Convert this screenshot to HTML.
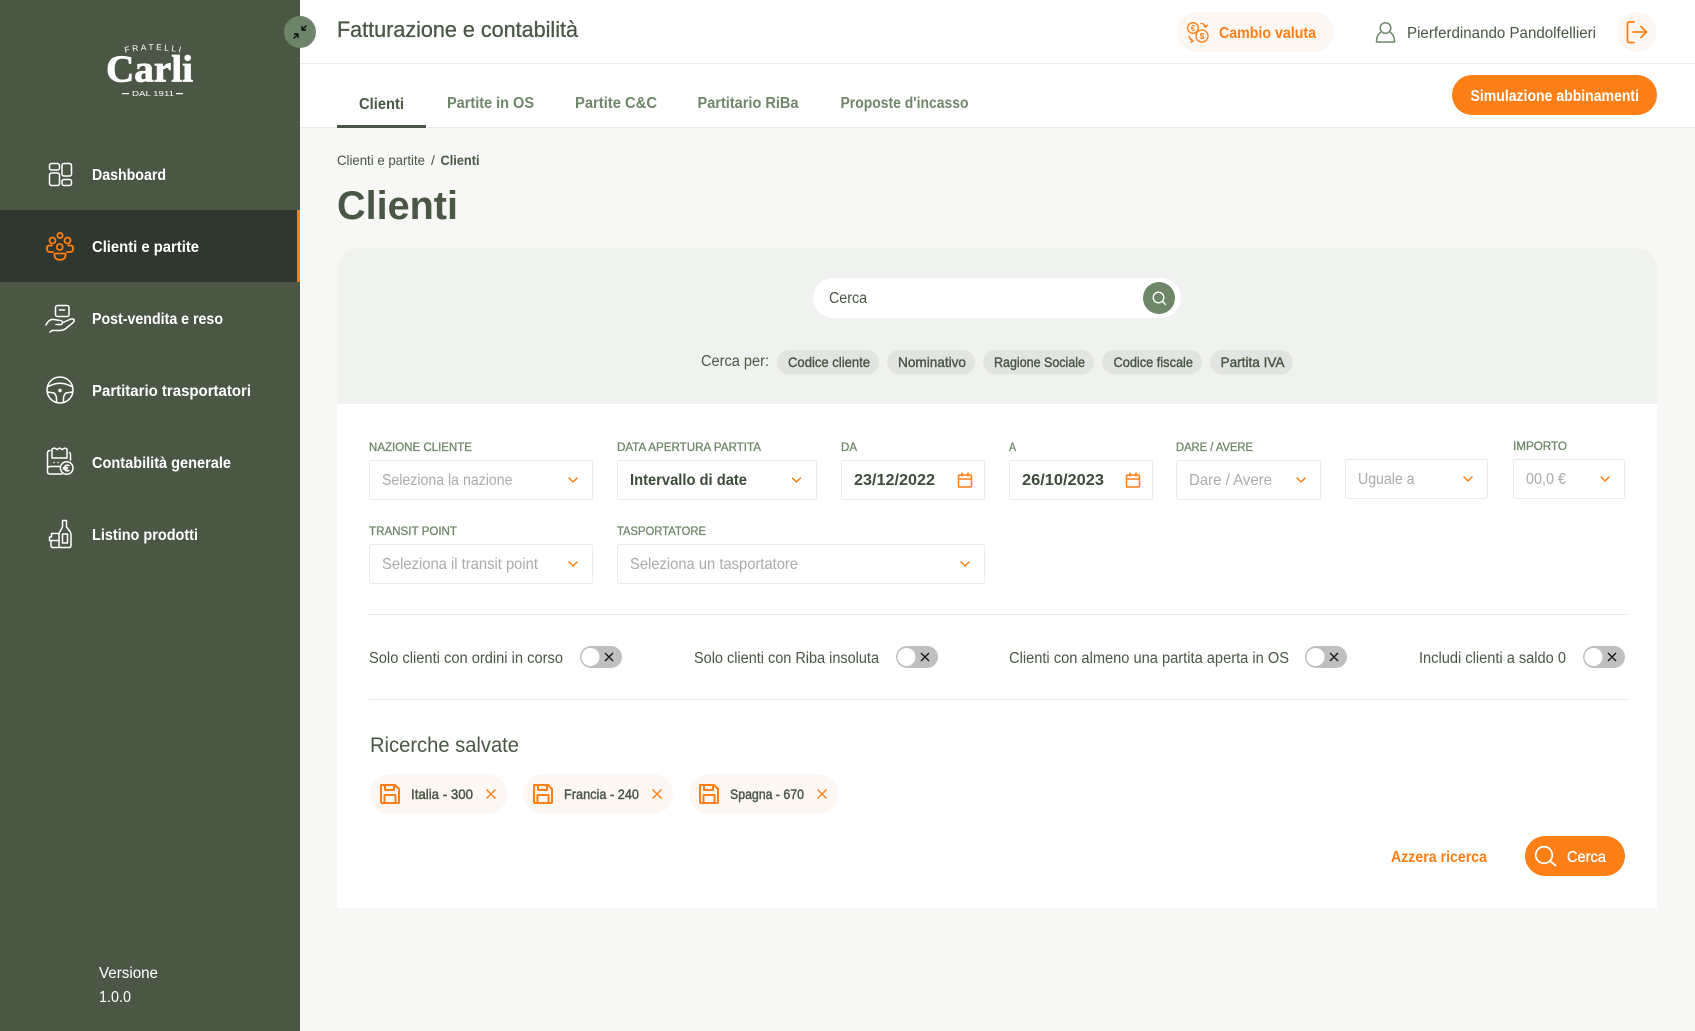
<!DOCTYPE html>
<html lang="it"><head><meta charset="utf-8"><title>Clienti</title>
<style>
html,body{margin:0;padding:0;background:#f7f7f5;width:1695px;height:1031px;overflow:hidden}
svg{display:block}
text{font-family:"Liberation Sans",sans-serif;white-space:pre}
.nav{font-size:15.5px;font-weight:700;fill:#fff}
.tab{font-size:15.5px;fill:#6f8769;font-weight:700}
.lab{font-size:11.5px;fill:#6f8769;stroke:#6f8769;stroke-width:.3}
.ph{font-size:16px;fill:#a9aca7}
.val{font-size:16px;fill:#3f4b3b;font-weight:700}
.tg{font-size:15.5px;fill:#4a5745}
.chip{font-size:14px;fill:#4a5745;stroke:#4a5745;stroke-width:.4}
.sv{font-size:14px;fill:#4a5745;stroke:#4a5745;stroke-width:.45}
.or{fill:none;stroke:#ff7f17;stroke-width:1.5;stroke-linecap:round;stroke-linejoin:round}
.wh{fill:none;stroke:#fff;stroke-width:1.5;stroke-linecap:round;stroke-linejoin:round}
.box{fill:#fff;stroke:#ebebeb;stroke-width:1}
</style></head><body>
<svg xmlns="http://www.w3.org/2000/svg" width="1695" height="1031" viewBox="0 0 1695 1031">
<rect width="1695" height="1031" fill="#f7f7f5"/>
<!-- top bars -->
<rect x="300" width="1395" height="127" fill="#fff"/>
<rect x="300" y="63" width="1395" height="1" fill="#eeeeec"/>
<rect x="300" y="127" width="1395" height="1" fill="#e9e9e7"/>
<!-- sidebar -->
<rect width="300" height="1031" fill="#4a5745"/>
<rect y="210" width="300" height="72" fill="#30372e"/>
<rect x="297" y="210" width="3" height="72" fill="#ff7f17"/>
<!-- logo -->
<path id="arc" d="M125 53 Q153 47 183 53" fill="none"/>
<text font-size="8.5" fill="#fff" letter-spacing="2.4"><textPath href="#arc">FRATELLI</textPath></text>
<text x="106" y="81.5" textLength="87" lengthAdjust="spacingAndGlyphs" stroke="#fff" stroke-width=".8" style="font-family:'Liberation Serif',serif;font-size:38px;font-weight:700;fill:#fff">Carli</text>
<rect x="122" y="93" width="7" height="1.2" fill="#fff"/><rect x="176" y="93" width="7" height="1.2" fill="#fff"/>
<text x="132" y="96" textLength="42" lengthAdjust="spacingAndGlyphs" font-size="7.5" fill="#fff">DAL 1911</text>
<!-- collapse -->
<circle cx="300" cy="32" r="16" fill="#6e8469"/>
<path d="M293.5 38.5L298 34M298 38V34H294M306.5 25.5L302 30M302 26V30H306" fill="none" stroke="#111" stroke-width="1.4"/>
<!-- nav text -->
<text class="nav" x="92" y="180" textLength="74" lengthAdjust="spacingAndGlyphs">Dashboard</text>
<text class="nav" x="92" y="252" textLength="107" lengthAdjust="spacingAndGlyphs">Clienti e partite</text>
<text class="nav" x="92" y="324" textLength="131" lengthAdjust="spacingAndGlyphs">Post-vendita e reso</text>
<text class="nav" x="92" y="396" textLength="159" lengthAdjust="spacingAndGlyphs">Partitario trasportatori</text>
<text class="nav" x="92" y="468" textLength="139" lengthAdjust="spacingAndGlyphs">Contabilità generale</text>
<text class="nav" x="92" y="540" textLength="106" lengthAdjust="spacingAndGlyphs">Listino prodotti</text>
<text x="99" y="978" textLength="59" lengthAdjust="spacingAndGlyphs" font-size="15.5" fill="#fff">Versione</text>
<text x="99" y="1002" textLength="32" lengthAdjust="spacingAndGlyphs" font-size="15.5" fill="#fff">1.0.0</text>
<!-- nav icons -->
<g class="wh">
<rect x="49.5" y="163.5" width="10" height="6.5" rx="2"/><rect x="49.5" y="173" width="10" height="12.5" rx="2"/>
<rect x="62" y="163.5" width="9.5" height="12.5" rx="2"/><rect x="62" y="179.5" width="9.5" height="6" rx="2"/>
</g>
<g class="or" style="stroke-width:1.8">
<circle cx="60" cy="235.5" r="2.6"/><circle cx="52.5" cy="240.5" r="3"/><circle cx="67.5" cy="240.5" r="3"/><circle cx="59.7" cy="247" r="3"/>
<path d="M52 245.5H49.5Q47 245.5 47 248V249Q47 252 50 252H53M68 245.5H70.5Q73 245.5 73 248V249Q73 252 70 252H67M54.5 253.5H65.5Q66 259.8 60 259.8Q54 259.8 54.5 253.5Z"/>
</g>
<g class="wh">
<rect x="55.5" y="305.5" width="13.5" height="11" rx="2"/><path d="M59.5 310H64.5"/>
<path d="M46 325Q49 318.5 54 319.5L60 320.5Q63 321 62.5 323Q62 325 59 324.5H56M63 322.5L71 319Q75 318.5 74 321.5Q73 323 67 327.5Q65 330 60 330.5H52L50 332"/>
<circle cx="60" cy="390" r="13"/>
<path d="M48.5 386.5Q60 380 71.5 386.5M47.5 392L54 393Q57 395 56.5 402M72.5 392L66 393Q63 395 63.5 402"/>
<circle cx="60" cy="390.5" r="1" fill="#fff"/>
<path d="M62 474H50Q47.5 474 47.5 471.5V453Q47.5 450.5 50 450.5M52 458V449L54.5 448 57 449.5 59.5 448 62 449.5 65 448 67 449V458M52 458H67M69.5 452.5Q70.5 453 70.5 455V460M47.5 468.5Q48 466.5 50 466.5H60M54 462.5H54.1M58 462.5H58.1"/>
<circle cx="66.7" cy="468" r="6.3"/><path d="M69 465.5Q65 464 64.3 468Q65 472 69 470.5M63.5 467.5H67.5M63.5 469H67"/>
<path d="M62.5 520.5H66.5V527L70 531.5Q71 533 71 535V545.5Q71 547.5 69 547.5H61Q59 547.5 59 545.5V535Q59 533 60 531.5L62.5 527Z"/>
<rect x="62.5" y="534" width="5" height="9"/>
<path d="M59 533.5H51.5V537H49.5V540.5H51V545.5Q51 547.5 53 547.5H60M51 540.5H59"/>
</g>
<!-- header -->
<text x="337" y="37" textLength="241" lengthAdjust="spacingAndGlyphs" font-size="22" fill="#4a5745" stroke="#4a5745" stroke-width=".3">Fatturazione e contabilità</text>
<rect x="1177" y="12" width="157" height="40" rx="20" fill="#fdf7f3"/>
<g class="or" style="stroke-width:1.3">
<circle cx="1193" cy="28" r="5.3"/><circle cx="1202" cy="36" r="6"/>
<path d="M1201 23.5Q1205 23.5 1206 27M1206 27L1207.500 25M1206 27L1204 26M1189 36Q1189.5 40 1193 41M1193 41L1191 42.5M1193 41L1191 39"/>
</g>
<text x="1193" y="31" text-anchor="middle" font-size="8" fill="#ff7f17" font-weight="700">€</text>
<text x="1202" y="39" text-anchor="middle" font-size="8.5" fill="#ff7f17" font-weight="700">$</text>
<text x="1219" y="38" textLength="97" lengthAdjust="spacingAndGlyphs" font-size="15.5" fill="#ff7f17" font-weight="700">Cambio valuta</text>
<g fill="none" stroke="#6f8769" stroke-width="1.5">
<circle cx="1385.5" cy="28" r="5.3"/>
<path d="M1381 32Q1376.5 35 1376.5 41.5V42H1394.5V41.5Q1394.5 35 1390 32"/>
</g>
<text x="1407" y="38" textLength="189" lengthAdjust="spacingAndGlyphs" font-size="15.5" fill="#4a5745">Pierferdinando Pandolfellieri</text>
<circle cx="1637" cy="32" r="20" fill="#fdf7f3"/>
<path d="M1634 22H1629Q1627.5 22 1627.5 23.5V41Q1627.5 42.5 1629 42.5H1634M1633 32H1646.5M1641 26.5L1646.5 32L1641 37.5" fill="none" stroke="#ff7f17" stroke-width="1.8" stroke-linecap="round" stroke-linejoin="round"/>
<!-- tabs -->
<text x="359" y="109" textLength="45" lengthAdjust="spacingAndGlyphs" font-size="15.5" font-weight="700" fill="#4a5745">Clienti</text>
<rect x="337" y="125" width="89" height="3" fill="#4a5745"/>
<text class="tab" x="447" y="108" textLength="87" lengthAdjust="spacingAndGlyphs">Partite in OS</text>
<text class="tab" x="575" y="108" textLength="82" lengthAdjust="spacingAndGlyphs">Partite C&amp;C</text>
<text class="tab" x="697.500" y="108" textLength="101" lengthAdjust="spacingAndGlyphs">Partitario RiBa</text>
<text class="tab" x="840.500" y="108" textLength="128" lengthAdjust="spacingAndGlyphs">Proposte d'incasso</text>
<rect x="1452" y="75" width="205" height="40" rx="20" fill="#ff7f17"/>
<text x="1470.5" y="101" textLength="168.5" lengthAdjust="spacingAndGlyphs" font-size="15.5" font-weight="700" fill="#fff">Simulazione abbinamenti</text>
<!-- breadcrumb + title -->
<text x="337" y="165" textLength="88" lengthAdjust="spacingAndGlyphs" font-size="14" fill="#4a5745">Clienti e partite</text>
<text x="431" y="165" font-size="14" fill="#4a5745">/</text>
<text x="440.5" y="165" textLength="39" lengthAdjust="spacingAndGlyphs" font-size="14" font-weight="700" fill="#4a5745">Clienti</text>
<text x="337" y="219" textLength="121" lengthAdjust="spacingAndGlyphs" font-size="40" font-weight="700" fill="#4a5745">Clienti</text>
<!-- panel -->
<path d="M337 908V272Q337 248 361 248H1633Q1657 248 1657 272V908Z" fill="#fff"/>
<path d="M337 404V272Q337 248 361 248H1633Q1657 248 1657 272V404Z" fill="#f0f2ef"/>
<rect x="813" y="278" width="368" height="40" rx="20" fill="#fff"/>
<text x="829" y="303" textLength="38" lengthAdjust="spacingAndGlyphs" font-size="15.5" fill="#4a5745">Cerca</text>
<circle cx="1159" cy="298" r="16" fill="#6f8769"/>
<circle cx="1158.5" cy="297.5" r="5.3" fill="none" stroke="#fff" stroke-width="1.3"/><path d="M1162.5 301.5L1165.5 304.5" stroke="#fff" stroke-width="1.3" stroke-linecap="round"/>
<text x="701" y="366" textLength="68" lengthAdjust="spacingAndGlyphs" font-size="15.5" fill="#4a5745">Cerca per:</text>
<g fill="#e2e4e1">
<rect x="777" y="350" width="102" height="24.5" rx="12.2"/><rect x="887" y="350" width="88" height="24.5" rx="12.2"/><rect x="983" y="350" width="111" height="24.5" rx="12.2"/><rect x="1102" y="350" width="100" height="24.5" rx="12.2"/><rect x="1210" y="350" width="83" height="24.5" rx="12.2"/>
</g>
<text class="chip" x="788" y="367" textLength="82" lengthAdjust="spacingAndGlyphs">Codice cliente</text>
<text class="chip" x="898" y="367" textLength="68" lengthAdjust="spacingAndGlyphs">Nominativo</text>
<text class="chip" x="994" y="367" textLength="91" lengthAdjust="spacingAndGlyphs">Ragione Sociale</text>
<text class="chip" x="1113.5" y="367" textLength="79.5" lengthAdjust="spacingAndGlyphs">Codice fiscale</text>
<text class="chip" x="1220.5" y="367" textLength="64" lengthAdjust="spacingAndGlyphs">Partita IVA</text>
<!-- labels -->
<text class="lab" x="369" y="451" textLength="103" lengthAdjust="spacingAndGlyphs">NAZIONE CLIENTE</text>
<text class="lab" x="617" y="451" textLength="144" lengthAdjust="spacingAndGlyphs">DATA APERTURA PARTITA</text>
<text class="lab" x="841" y="451" textLength="16" lengthAdjust="spacingAndGlyphs">DA</text>
<text class="lab" x="1009" y="451" textLength="7" lengthAdjust="spacingAndGlyphs">A</text>
<text class="lab" x="1176" y="451" textLength="77" lengthAdjust="spacingAndGlyphs">DARE / AVERE</text>
<text class="lab" x="1513" y="450" textLength="54" lengthAdjust="spacingAndGlyphs">IMPORTO</text>
<text class="lab" x="369" y="535" textLength="88" lengthAdjust="spacingAndGlyphs">TRANSIT POINT</text>
<text class="lab" x="617" y="535" textLength="89" lengthAdjust="spacingAndGlyphs">TASPORTATORE</text>
<!-- boxes -->
<rect class="box" x="369.5" y="460.5" width="223" height="39" rx="2"/>
<rect class="box" x="617.5" y="460.5" width="199" height="39" rx="2"/>
<rect class="box" x="841.5" y="460.5" width="143" height="39" rx="2"/>
<rect class="box" x="1009.5" y="460.5" width="143" height="39" rx="2"/>
<rect class="box" x="1176.5" y="460.5" width="144" height="39" rx="2"/>
<rect class="box" x="1345.5" y="459.5" width="142" height="39" rx="2"/>
<rect class="box" x="1513.5" y="459.5" width="111" height="39" rx="2"/>
<rect class="box" x="369.5" y="544.5" width="223" height="39" rx="2"/>
<rect class="box" x="617.5" y="544.5" width="367" height="39" rx="2"/>
<text class="ph" x="382" y="485" textLength="130.5" lengthAdjust="spacingAndGlyphs">Seleziona la nazione</text>
<text class="val" x="630" y="485" textLength="117" lengthAdjust="spacingAndGlyphs">Intervallo di date</text>
<text class="val" x="854" y="485" textLength="81" lengthAdjust="spacingAndGlyphs">23/12/2022</text>
<text class="val" x="1022" y="485" textLength="82" lengthAdjust="spacingAndGlyphs">26/10/2023</text>
<text class="ph" x="1189" y="485" textLength="83" lengthAdjust="spacingAndGlyphs">Dare / Avere</text>
<text class="ph" x="1358" y="484" textLength="56.5" lengthAdjust="spacingAndGlyphs">Uguale a</text>
<text class="ph" x="1526" y="484" textLength="40" lengthAdjust="spacingAndGlyphs">00,0 €</text>
<text class="ph" x="382" y="569" textLength="156" lengthAdjust="spacingAndGlyphs">Seleziona il transit point</text>
<text class="ph" x="630" y="569" textLength="168" lengthAdjust="spacingAndGlyphs">Seleziona un tasportatore</text>
<!-- chevrons -->
<g class="or">
<path d="M569 478L573 482L577 478"/><path d="M792.5 478L796.5 482L800.5 478"/><path d="M1297 478L1301 482L1305 478"/>
<path d="M1464 477L1468 481L1472 477"/><path d="M1601 477L1605 481L1609 477"/>
<path d="M569 562L573 566L577 562"/><path d="M961 562L965 566L969 562"/>
<!-- calendars -->
<rect x="958.5" y="475" width="13" height="12" rx="1"/><path d="M958.5 479H971.5M962 473V476M968 473V476"/>
<rect x="1126.5" y="475" width="13" height="12" rx="1"/><path d="M1126.5 479H1139.5M1130 473V476M1136 473V476"/>
</g>
<!-- dividers -->
<rect x="369" y="614" width="1259" height="1" fill="#e9e9e7"/>
<rect x="369" y="699" width="1259" height="1" fill="#e9e9e7"/>
<!-- toggles -->
<text class="tg" x="369" y="663" textLength="194" lengthAdjust="spacingAndGlyphs">Solo clienti con ordini in corso</text>
<text class="tg" x="694" y="663" textLength="185" lengthAdjust="spacingAndGlyphs">Solo clienti con Riba insoluta</text>
<text class="tg" x="1009" y="663" textLength="280" lengthAdjust="spacingAndGlyphs">Clienti con almeno una partita aperta in OS</text>
<text class="tg" x="1419" y="663" textLength="147" lengthAdjust="spacingAndGlyphs">Includi clienti a saldo 0</text>
<g fill="#bfbfbf">
<rect x="580" y="646" width="42" height="22" rx="11"/><rect x="896" y="646" width="42" height="22" rx="11"/><rect x="1305" y="646" width="42" height="22" rx="11"/><rect x="1583" y="646" width="42" height="22" rx="11"/>
</g>
<g fill="#fff">
<circle cx="590.5" cy="657" r="9"/><circle cx="906.5" cy="657" r="9"/><circle cx="1315.5" cy="657" r="9"/><circle cx="1593.5" cy="657" r="9"/>
</g>
<path d="M605 653L613 661M613 653L605 661M921 653L929 661M929 653L921 661M1330 653L1338 661M1338 653L1330 661M1608 653L1616 661M1616 653L1608 661" stroke="#111" stroke-width="1.3" fill="none"/>
<!-- saved -->
<text x="370" y="752" textLength="149" lengthAdjust="spacingAndGlyphs" font-size="21.5" fill="#4a5745">Ricerche salvate</text>
<g fill="#fdf7f3">
<rect x="370" y="774" width="137" height="40" rx="20"/><rect x="523" y="774" width="150" height="40" rx="20"/><rect x="689" y="774" width="149" height="40" rx="20"/>
</g>
<g fill="none" stroke="#ff7f17" stroke-width="2" stroke-linejoin="round">
<path d="M381 785H395L399 789V802Q399 803 398 803H382Q381 803 381 802ZM385 785V790H394V785M384.5 803V795H395.5V803"/>
<path d="M534 785H548L552 789V802Q552 803 551 803H535Q534 803 534 802ZM538 785V790H547V785M537.5 803V795H548.5V803"/>
<path d="M700 785H714L718 789V802Q718 803 717 803H701Q700 803 700 802ZM704 785V790H713V785M703.5 803V795H714.5V803"/>
</g>
<text class="sv" x="411" y="799" textLength="62" lengthAdjust="spacingAndGlyphs">Italia - 300</text>
<text class="sv" x="564" y="799" textLength="75" lengthAdjust="spacingAndGlyphs">Francia - 240</text>
<text class="sv" x="730" y="799" textLength="74" lengthAdjust="spacingAndGlyphs">Spagna - 670</text>
<path d="M486.5 789.5L495.5 798.5M495.5 789.5L486.5 798.5M652.5 789.5L661.5 798.5M661.5 789.5L652.5 798.5M817.5 789.5L826.5 798.5M826.5 789.5L817.5 798.5" stroke="#ff7f17" stroke-width="1.4" fill="none"/>
<!-- actions -->
<text x="1391" y="862" textLength="96" lengthAdjust="spacingAndGlyphs" font-size="15.5" font-weight="700" fill="#ff7f17">Azzera ricerca</text>
<rect x="1525" y="836" width="100" height="40" rx="20" fill="#ff7f17"/>
<circle cx="1544" cy="855" r="8.3" fill="none" stroke="#fff" stroke-width="1.8"/><path d="M1550 861L1555.5 865.5" stroke="#fff" stroke-width="1.8" stroke-linecap="round"/>
<text x="1567" y="862" textLength="39" lengthAdjust="spacingAndGlyphs" font-size="15.5" fill="#fff" stroke="#fff" stroke-width=".35">Cerca</text>
</svg>
</body></html>
